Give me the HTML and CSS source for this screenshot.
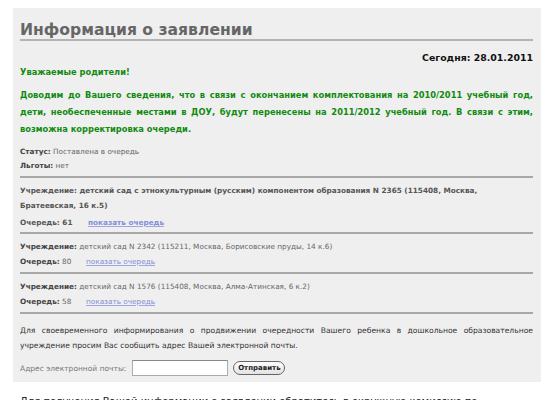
FILE: index.html
```html
<!DOCTYPE html>
<html lang="ru">
<head>
<meta charset="utf-8">
<title>Информация о заявлении</title>
<link rel="stylesheet" href="styles.css">
</head>
<body>
<div class="panel">
  <h1 class="title">Информация о заявлении</h1>
  <div class="today">Сегодня: 28.01.2011</div>
  <p class="notice">Уважаемые родители!</p>
  <p class="notice notice-body">Доводим до Вашего сведения, что в связи с окончанием комплектования на 2010/2011 учебный год, дети, необеспеченные местами в ДОУ, будут перенесены на 2011/2012 учебный год. В связи с этим, возможна корректировка очереди.</p>

  <div class="fields">
    <div class="field"><b>Статус:</b> Поставлена в очередь</div>
    <div class="field"><b>Льготы:</b> нет</div>
  </div>

  <div class="org org-main">
    <div class="org-name"><b>Учреждение:</b> детский сад с этнокультурным (русским) компонентом образования N 2365 (115408, Москва, Братеевская, 16 к.5)</div>
    <div class="queue"><span class="queue-count"><b>Очередь:</b> 61</span><a href="#" class="queue-link">показать очередь</a></div>
  </div>
  <div class="org">
    <div class="org-name"><b>Учреждение:</b> детский сад N 2342 (115211, Москва, Борисовские пруды, 14 к.6)</div>
    <div class="queue"><span class="queue-count"><b>Очередь:</b> 80</span><a href="#" class="queue-link">показать очередь</a></div>
  </div>
  <div class="org">
    <div class="org-name"><b>Учреждение:</b> детский сад N 1576 (115408, Москва, Алма-Атинская, 6 к.2)</div>
    <div class="queue"><span class="queue-count"><b>Очередь:</b> 58</span><a href="#" class="queue-link">показать очередь</a></div>
  </div>

  <div class="subscribe">
    <p class="subscribe-text">Для своевременного информирования о продвижении очередности Вашего ребенка в дошкольное образовательное учреждение просим Вас сообщить адрес Вашей электронной почты.</p>
    <form class="subscribe-form">
      <label class="subscribe-label" for="email">Адрес электронной почты:</label>
      <input class="subscribe-input" id="email" type="text">
      <button class="subscribe-btn" type="button">Отправить</button>
    </form>
  </div>
</div>
<p class="footer-text">Для получения Вашей информации о заявлении обратитесь в окружную комиссию по комплектованию.</p>
</body>
</html>
```

FILE: styles.css
```css
html, body {
  margin: 0;
  padding: 0;
  background: #fff;
}

body {
  font-family: "DejaVu Sans", Verdana, sans-serif;
  font-size: 7.3px;
  color: #666;
}

.panel {
  margin: 8px 9px 0 13px;
  padding: 13px 8px 6px 7px;
  background: #efefef;
}

.title {
  margin: 0;
  font-size: 15.6px;
  line-height: 18px;
  font-weight: bold;
  color: #666;
  border-bottom: 2px solid #b3b3b3;
}

.today {
  margin-top: 10px;
  text-align: right;
  font-size: 9.4px;
  line-height: 14px;
  font-weight: bold;
  color: #111;
}

.notice {
  margin: 0;
  font-size: 8.3px;
  line-height: 14px;
  font-weight: bold;
  color: #118a11;
}

.notice-body {
  margin-top: 8px;
  line-height: 17px;
  text-align: justify;
}

.fields {
  margin-top: 7px;
}

.field {
  line-height: 14px;
}

.field b,
.org b {
  color: #444;
}

.org {
  border-top: 2px solid #a8a8a8;
  padding: 5px 0 3px;
  line-height: 15px;
}

.org-main {
  margin-top: 3px;
  padding-bottom: 2px;
}

.org-main,
.org-main b {
  font-weight: bold;
  color: #555;
}

.org-main .queue {
  margin-top: 2px;
}

.queue-count {
  display: inline-block;
  width: 66px;
}

.org-main .queue-count {
  width: 68px;
}

.queue-link {
  color: #8190d4;
  text-decoration: underline;
  text-decoration-color: #a0a4f0;
}

.subscribe {
  border-top: 2px solid #a8a8a8;
  padding-top: 9px;
  color: #333;
}

.subscribe-text {
  margin: 0;
  font-size: 7.6px;
  line-height: 15px;
  text-align: justify;
}

.subscribe-form {
  margin-top: 7px;
  display: flex;
  align-items: center;
  gap: 4px;
}

.subscribe-label {
  color: #777;
  font-size: 7.5px;
}

.subscribe-input {
  box-sizing: border-box;
  width: 96px;
  height: 16px;
  margin: 0 0 0 2px;
  padding: 1px 2px;
  border: 1px solid #aaa;
  border-top-color: #888;
  background: #fff;
  font: inherit;
}

.subscribe-btn {
  box-sizing: border-box;
  margin: 0 0 0 1px;
  width: 52px;
  height: 14px;
  padding: 0;
  border: 1px solid #666;
  border-radius: 7px;
  background: linear-gradient(#ffffff, #e2e2e2);
  font-family: "DejaVu Sans", Verdana, sans-serif;
  font-size: 7px;
  font-weight: bold;
  color: #222;
  line-height: 12px;
}

.footer-text {
  margin: 13px 0 0 20px;
  font-size: 10px;
  line-height: 14px;
  color: #222;
}
```
